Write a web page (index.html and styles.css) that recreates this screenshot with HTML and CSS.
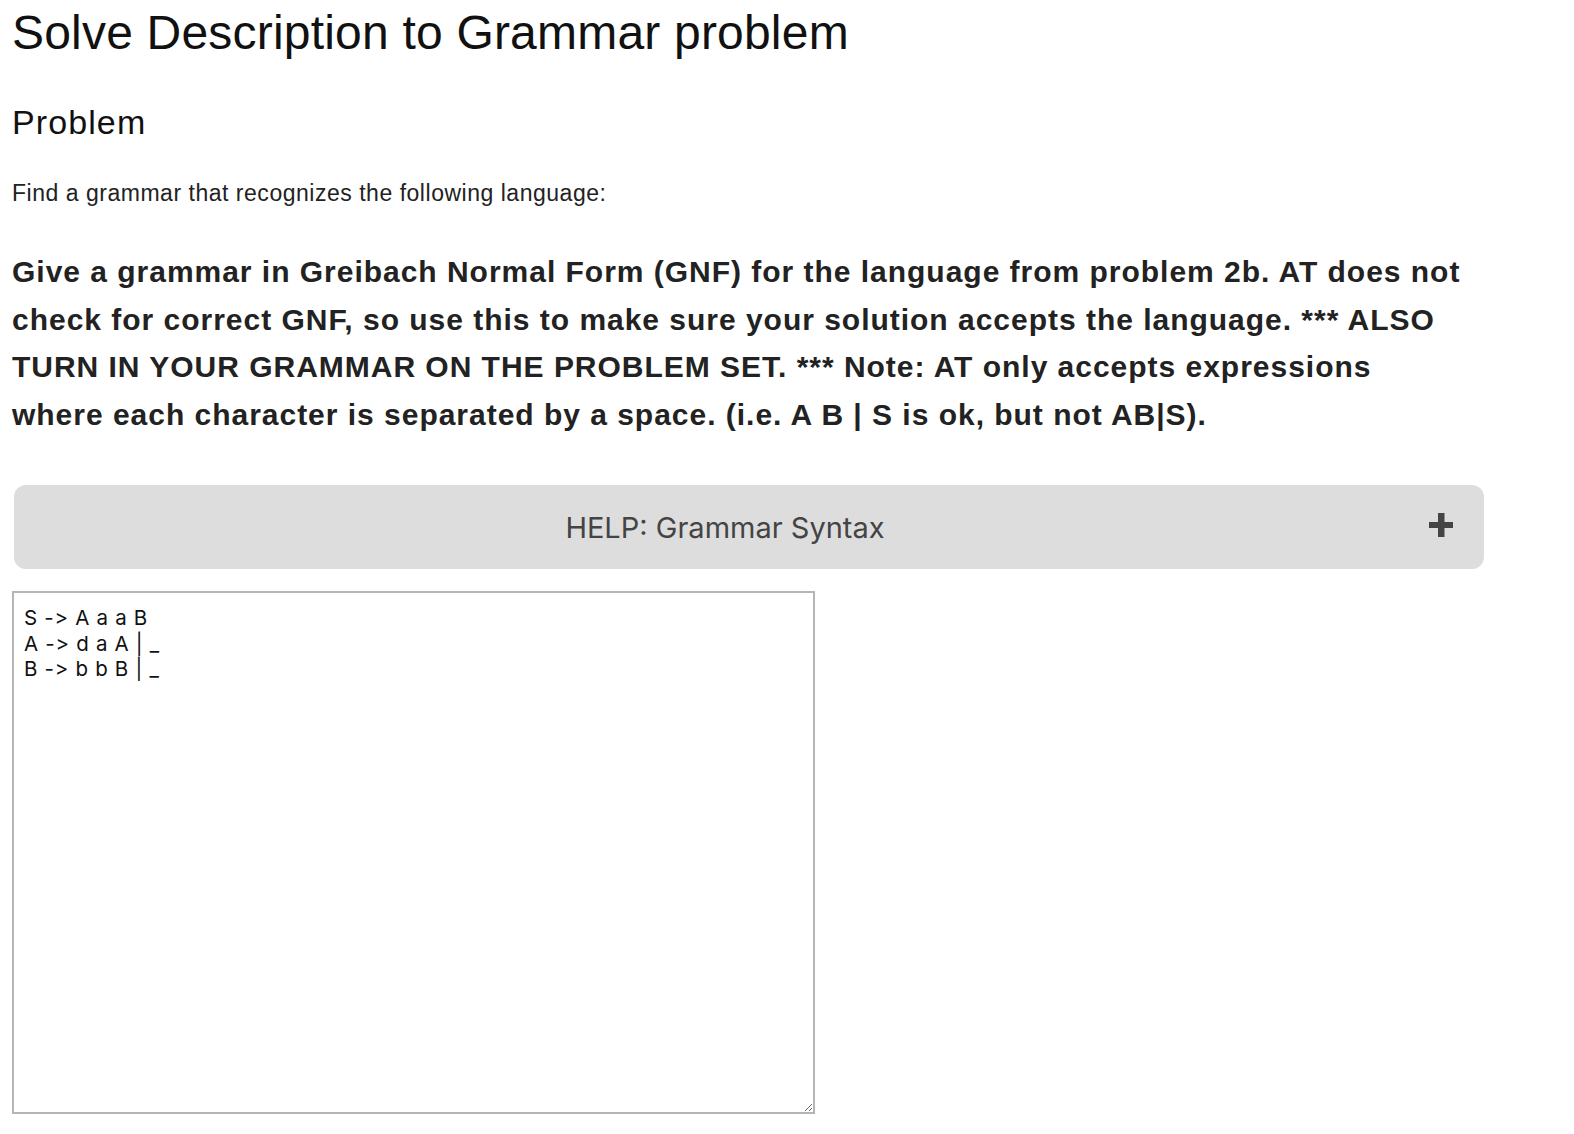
FILE: index.html
```html
<!DOCTYPE html>
<html lang="en">
<head>
<meta charset="utf-8">
<title>Solve Description to Grammar problem</title>
<link rel="stylesheet" href="styles.css">
</head>
<body>
<div class="page">
  <h1 class="title">Solve Description to Grammar problem</h1>
  <h2 class="section">Problem</h2>
  <p class="intro">Find a grammar that recognizes the following language:</p>
  <p class="statement">Give a grammar in Greibach Normal Form (GNF) for the language from problem 2b. AT does not check for correct GNF, so use this to make sure your solution accepts the language. *** ALSO TURN IN YOUR GRAMMAR ON THE PROBLEM SET. *** Note: AT only accepts expressions where each character is separated by a space. (i.e. A B | S is ok, but not AB|S).</p>
  <div class="help">
    <span class="help-label">HELP: Grammar Syntax</span>
    <svg class="help-plus" width="24" height="24" viewBox="0 0 24 24" aria-hidden="true">
      <rect x="9" y="0" width="6.5" height="24" fill="#444"/>
      <rect x="0" y="9" width="24" height="6" fill="#444"/>
    </svg>
  </div>
  <textarea class="editor" spellcheck="false">S -> A a a B
A -> d a A | _
B -> b b B | _</textarea>
</div>
</body>
</html>
```
FILE: styles.css
```css
html, body {
  margin: 0;
  padding: 0;
  background: #fff;
}

.page {
  padding: 5px 12px 0 12px;
  font-family: "Liberation Sans", Arial, Helvetica, sans-serif;
  color: #222;
}

.title {
  margin: 0;
  font-size: 48px;
  line-height: 56px;
  font-weight: normal;
  color: #111;
  letter-spacing: 0.2px;
}

.section {
  margin: 41px 0 0 0;
  font-size: 34px;
  line-height: 40px;
  font-weight: normal;
  color: #111;
  letter-spacing: 1.1px;
}

.intro {
  margin: 38px 0 0 0;
  font-size: 23px;
  line-height: 26px;
  color: #222;
  letter-spacing: 0.52px;
}

.statement {
  margin: 42px 0 0 0;
  width: 1452px;
  font-size: 30px;
  line-height: 47.5px;
  font-weight: bold;
  color: #222;
  letter-spacing: 0.98px;
}

.help {
  margin: 47px 0 0 2px;
  width: 1470px;
  height: 84px;
  box-sizing: border-box;
  background: #dddddd;
  border-radius: 12px;
  display: flex;
  align-items: center;
  justify-content: center;
  position: relative;
}

.help-label {
  font-family: Inter, "Liberation Sans", sans-serif;
  font-size: 29px;
  color: #444;
  margin-right: 48px;
}

.help-plus {
  position: absolute;
  right: 31px;
  top: 28px;
}

.editor {
  display: block;
  margin: 22px 0 0 0;
  width: 803px;
  height: 523px;
  box-sizing: border-box;
  border: 2px solid #b5b5b5;
  border-radius: 0;
  padding: 12px 10px;
  font-family: Inter, "Liberation Sans", sans-serif;
  font-feature-settings: "calt" 0, "liga" 0;
  font-variant-ligatures: none;
  font-size: 20.5px;
  line-height: 25.5px;
  letter-spacing: 0.7px;
  color: #111;
  resize: both;
  outline: none;
}
```
